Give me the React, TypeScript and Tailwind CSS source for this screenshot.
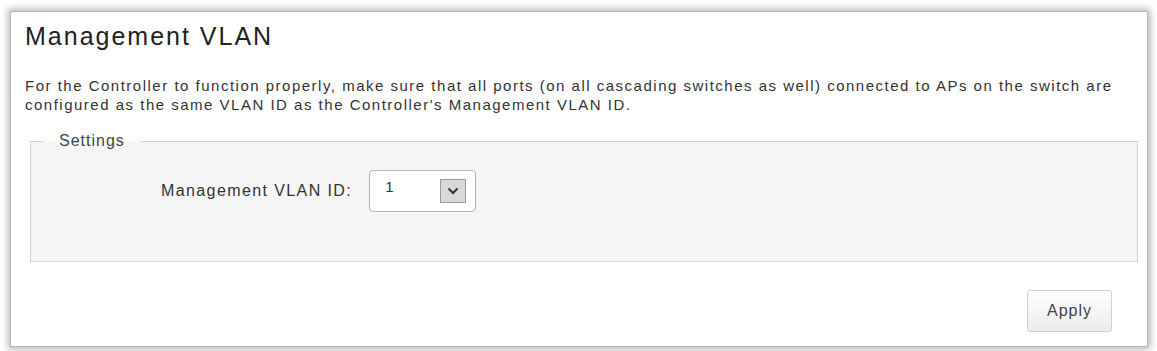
const App = () => {
  return (
    <div className="min-h-screen bg-white pl-[10px] pt-[11px] font-['Liberation_Sans',Arial,sans-serif]">
      {/* Panel */}
      <div className="w-[1138px] h-[336px] bg-white border border-[#b8b8b8] shadow-[0_0_7px_2px_rgba(0,0,0,0.3)] flex flex-col">
        <h1 className="pl-[14px] pt-[9px] text-[25px] leading-[30px] tracking-[2px] text-[#222]">
          Management VLAN
        </h1>

        <p className="pl-[14px] pr-[16px] mt-[25px] text-[15px] leading-[19px] tracking-[1.5px] text-[#333]">
          For the Controller to function properly, make sure that all ports (on all cascading switches as well) connected to APs on the switch are configured as the same VLAN ID as the Controller's Management VLAN ID.
        </p>

        {/* Settings fieldset */}
        <fieldset className="ml-[19px] mr-[9px] mt-[18px] h-[130px] border border-[#d4d4d4] bg-[#f6f6f6]">
          <legend className="ml-[12px] px-[16px] text-[16px] leading-[18px] tracking-[1px] text-[#444]">
            Settings
          </legend>
          <div className="flex items-center pl-[130px] mt-[20px]">
            <span className="text-[16px] tracking-[1.4px] text-[#333]">Management VLAN ID:</span>
            <div className="ml-[17px] w-[107px] h-[42px] bg-white border border-[#b4b4b4] rounded-[4px] flex items-center justify-between pl-[15px] pr-[9px]">
              <span className="text-[15px] text-[#333] -mt-[8px]">1</span>
              <div className="w-[26px] h-[24px] bg-[#d9d9d9] border border-[#9a9a9a] flex items-center justify-center">
                <svg width="12" height="8" viewBox="0 0 12 8">
                  <path d="M1.5 1.5 L6 6 L10.5 1.5" fill="none" stroke="#333" strokeWidth="2" />
                </svg>
              </div>
            </div>
          </div>
        </fieldset>

        {/* Action */}
        <div className="flex justify-end pr-[35px] mt-[28px]">
          <button className="w-[85px] h-[42px] rounded-[3px] border border-[#d0d0d0] bg-gradient-to-b from-white to-[#ececec] text-[16px] tracking-[1px] text-[#444]">
            Apply
          </button>
        </div>
      </div>
    </div>
  );
};

export default App;
